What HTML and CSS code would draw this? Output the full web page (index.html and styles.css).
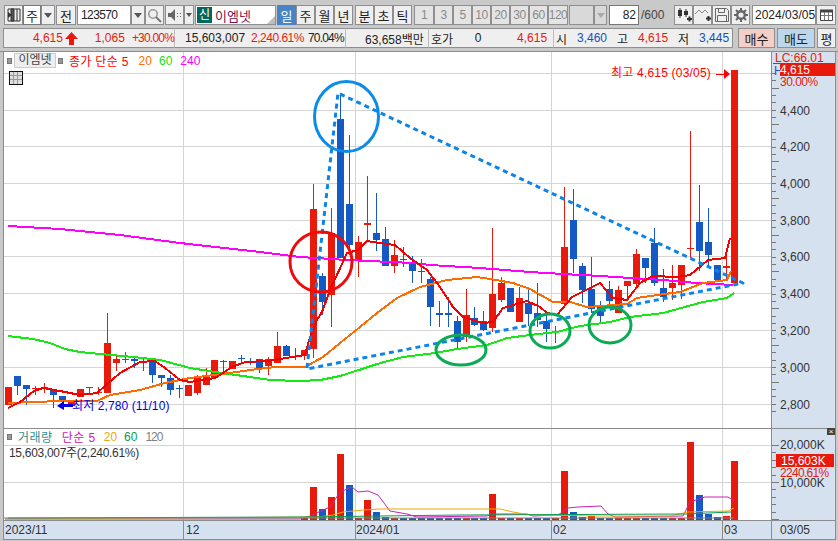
FILE: index.html
```html
<!DOCTYPE html>
<html lang="ko">
<head>
    <meta charset="UTF-8">
    <title>이엠넷 차트</title>
    <link rel="stylesheet" href="styles.css">
</head>
<body>
    <div class="toolbar">
        <button class="btn w18">
            <svg width="14" height="14" viewBox="0 0 14 14"><path d="M1 1h12v12H1z" fill="none" stroke="#333"/><path d="M4 1h3v12H4zM10 1v12" fill="#555" stroke="#333"/><path d="M5 7l-4-3v6z" fill="#333"/></svg>
        </button>
        <button class="btn btn-white w17">주</button>
        <button class="btn arrow w14"><i class="caret"></i></button>
        <button class="btn w19 gap1">전</button>
        <div class="field w55 gap1 code">123570</div>
        <button class="btn arrow w14"><i class="caret"></i></button>
        <button class="btn w18">
            <svg width="15" height="15" viewBox="0 0 15 15"><circle cx="6" cy="6" r="4.2" fill="none" stroke="#999" stroke-width="1.6"/><path d="M9 9l5 5" stroke="#777" stroke-width="2"/></svg>
        </button>
        <button class="btn w18 gap1">
            <svg width="14" height="12" viewBox="0 0 14 12"><path d="M0 4h3l4-4v12l-4-4H0z" fill="#666"/><path d="M9 4h1v1H9zM9 7h1v1H9zM12 4h1v1h-1zM12 7h1v1h-1z" fill="#666"/></svg>
        </button>
        <button class="btn arrow w10"><i class="caret small"></i></button>
        <div class="stock-name gap1">
            <span class="stock-tag">신</span>
            <span class="stock-text">이엠넷</span>
            <i class="resize"></i>
        </div>
        <button class="btn btn-on w18 gap1">일</button>
        <button class="btn w18 gap0">주</button>
        <button class="btn w18 gap0">월</button>
        <button class="btn w18 gap0">년</button>
        <button class="btn w18 gap2">분</button>
        <button class="btn w18 gap0">초</button>
        <button class="btn w18 gap0">틱</button>
        <button class="btn off w20 gap2">1</button>
        <button class="btn off w18 gap0">3</button>
        <button class="btn off w18 gap0">5</button>
        <button class="btn off w18 gap0">10</button>
        <button class="btn off w18 gap0">20</button>
        <button class="btn off w18 gap0">30</button>
        <button class="btn off w18 gap0">60</button>
        <button class="btn off w19 gap0">120</button>
        <button class="btn off blank w24 gap1"></button>
        <button class="btn off blank arrow w13"><i class="caret light"></i></button>
        <div class="field field-num w30 gap2">82</div>
        <span class="count">/600</span>
        <button class="btn w18 icon-first">
            <svg width="16" height="14" viewBox="0 0 16 14"><path d="M2 2h4v6H2zM8 3h4v4H8z" fill="#333"/><path d="M4 0v10M10 1v8" stroke="#333"/><path d="M11 11h5M13.500 8.500v5" stroke="#333" stroke-width="2"/></svg>
        </button>
        <button class="btn w18 gap0">
            <svg width="16" height="14" viewBox="0 0 16 14"><path d="M0 6l4-4 3 3 3-3 3 3" fill="none" stroke="#888"/><path d="M11 10.500h5M13.500 8v5" stroke="#333" stroke-width="2"/></svg>
        </button>
        <button class="btn w18 gap0">
            <svg width="14" height="14" viewBox="0 0 14 14"><path d="M.5.500h11l2 2v11H.5z" fill="none" stroke="#666"/><path d="M3.500.500v4h6v-4M2.500 13.500v-6h9v6" fill="none" stroke="#666"/></svg>
        </button>
        <button class="btn w18 gap0">
            <svg width="14" height="14" viewBox="0 0 14 14"><circle cx="7" cy="7" r="3.800" fill="none" stroke="#666" stroke-width="2.400"/><path d="M7 0v3M7 11v3M0 7h3M11 7h3M2 2l2 2M10 10l2 2M12 2l-2 2M4 10l-2 2" stroke="#666" stroke-width="2"/></svg>
        </button>
        <div class="field w63 gap2 date">2024/03/05</div>
        <button class="btn w19">
            <svg width="13" height="12" viewBox="0 0 13 12"><path d="M.5 2.500h12v9H.5z" fill="#fff" stroke="#444"/><path d="M0 .5h13v3H0z" fill="#444"/><path d="M4.500 3v8M8.500 3v8M1 6.500h11" stroke="#777"/></svg>
        </button>
    </div>

    <div class="quote">
        <div class="quote-group q1">
            <span class="up price">4,615</span>
            <svg class="up-arrow" width="13" height="13" viewBox="0 0 13 13"><path d="M6.500 0L13 7H9v6H4V7H0z" fill="#e81a0c"/></svg>
            <span class="up diff">1,065</span>
            <span class="up rate">+30.00%</span>
        </div>
        <div class="quote-group q2">
            <span class="volume">15,603,007</span>
            <span class="up vol-rate">2,240.61%</span>
            <span class="ratio">70.04%</span>
        </div>
        <div class="quote-group q3">63,658백만</div>
        <div class="quote-group q4">
            <span>호가</span>
            <span class="hoga">0</span>
            <span class="up hoga-price">4,615</span>
        </div>
        <div class="quote-group q5">
            <span>시</span><span class="down ohlc">3,460</span>
            <span class="ohlc-label">고</span><span class="up ohlc">4,615</span>
            <span class="ohlc-label">저</span><span class="down ohlc">3,445</span>
        </div>
        <button class="order buy">매수</button>
        <button class="order sell">매도</button>
        <button class="order flat">평</button>
    </div>

    <div class="chart">
        <svg id="chart" class="chart-svg" width="838" height="489" viewBox="0 51 838 489"></svg>
        <div class="legend">
            <i class="dot"></i>
            <span class="legend-name">이엠넷</span>
            <i class="dot dot-tight"></i>
            <span class="c-red">종가 단순 5</span>
            <span class="c-orange">20</span>
            <span class="c-green">60</span>
            <span class="c-pink">240</span>
        </div>
        <div class="grid-icon"></div>
        <div class="legend legend-vol">
            <i class="dot"></i>
            <span class="c-teal">거래량</span>
            <span class="c-violet">단순 5</span>
            <span class="c-amber">20</span>
            <span class="c-forest">60</span>
            <span class="c-gray">120</span>
        </div>
        <div class="vol-total">15,603,007주(2,240.61%)</div>
        <div class="close-x">×</div>
    </div>
    <script src="chart.js"></script>
</body>
</html>
```

FILE: styles.css
```css
* {
    box-sizing: border-box;
}
body {
    margin: 0;
    width: 838px;
    height: 541px;
    overflow: hidden;
    background: #c9c9c9;
    font-family: "Liberation Sans", "Noto Sans CJK KR", sans-serif;
    font-size: 12px;
    color: #222;
}
button {
    font: inherit;
    padding: 0;
}

/* top toolbar */
.toolbar {
    display: flex;
    height: 20px;
    margin: 5px 0 0 4px;
}
.btn {
    display: flex;
    align-items: center;
    justify-content: center;
    height: 20px;
    flex: none;
    background: #efefef;
    border: 1px solid #8f8f8f;
    color: #222;
    font-size: 13px;
}
.btn-white {
    background: #fff;
    border-color: #777;
}
.btn-on {
    background: #4a82c6;
    border-color: #4a82c6;
    color: #fff;
}
.off {
    color: #8a8a8a;
    background: #e4e4e4;
    font-size: 12px;
    letter-spacing: -0.5px;
}
.blank {
    background: #d9d9d9;
}
.w10 { width: 10px; }
.w13 { width: 13px; }
.w14 { width: 14px; }
.w17 { width: 18px; }
.w18 { width: 19px; }
.w19 { width: 20px; }
.w20 { width: 20px; }
.w24 { width: 25px; }
.w30 { width: 30px; }
.w55 { width: 54px; }
.w63 { width: 64px; }
.gap0 { margin-left: 0; }
.gap1 { margin-left: 1px; }
.gap2 { margin-left: 2px; }
.icon-first { margin-left: 2px; }
.caret {
    width: 0;
    height: 0;
    border: 4px solid transparent;
    border-top: 5px solid #555;
    border-bottom: 0;
}
.caret.small {
    border-width: 3px;
    border-top-width: 4px;
    border-bottom: 0;
}
.caret.light {
    border-top-color: #aaa;
}
.field {
    display: flex;
    align-items: center;
    height: 20px;
    flex: none;
    padding-left: 3px;
    background: #fff;
    border: 1px solid #8f8f8f;
    font-size: 12px;
}
.code {
    letter-spacing: -0.6px;
}
.field-num {
    justify-content: flex-end;
    padding: 0 2px 0 0;
    border-color: #777;
}
.date {
    padding-left: 2px;
}
.count {
    width: 33px;
    flex: none;
    padding-left: 2px;
    line-height: 20px;
    font-size: 12px;
    color: #444;
}
.stock-name {
    position: relative;
    display: flex;
    align-items: center;
    width: 81px;
    height: 20px;
    flex: none;
    padding-left: 1px;
    background: #fff;
    border: 1px solid #8f8f8f;
}
.stock-tag {
    width: 15px;
    height: 16px;
    background: #00695f;
    color: #fff;
    font-size: 12px;
    line-height: 16px;
    text-align: center;
}
.stock-text {
    margin-left: 3px;
    font-size: 13px;
    color: #7b0f4c;
}
.resize {
    position: absolute;
    right: 0;
    bottom: 0;
    border-left: 8px solid transparent;
    border-bottom: 8px solid #bdbdbd;
}

/* quote strip */
.quote {
    display: flex;
    height: 20px;
    margin: 3px 0 0 3px;
}
.quote-group {
    display: flex;
    align-items: center;
    height: 20px;
    flex: none;
    background: #efefef;
    border-top: 1px solid #8f8f8f;
    border-bottom: 1px solid #8f8f8f;
    border-right: 1px solid #bcbcbc;
    font-size: 12px;
    white-space: nowrap;
}
.up { color: #e81a0c; }
.down { color: #1450c0; }
.q1 {
    width: 172px;
    border-left: 1px solid #8f8f8f;
}
.price {
    width: 59px;
    text-align: right;
}
.up-arrow {
    margin-left: 2px;
}
.diff {
    width: 47px;
    text-align: right;
}
.rate {
    margin-left: 7px;
    letter-spacing: -0.8px;
}
.q2 { width: 171px; }
.volume { margin-left: 10px; }
.vol-rate {
    margin-left: 6px;
    letter-spacing: -0.5px;
}
.ratio {
    margin-left: 4px;
    letter-spacing: -0.8px;
}
.q3 {
    width: 83px;
    padding-left: 19px;
}
.q4 {
    width: 125px;
    padding-left: 2px;
}
.hoga {
    width: 34px;
    text-align: center;
    margin-left: 8px;
}
.hoga-price {
    margin-left: 22px;
}
.q5 {
    width: 179px;
    padding-left: 2px;
    border-right: 1px solid #8f8f8f;
}
.ohlc {
    width: 40px;
    text-align: right;
}
.ohlc-label {
    margin-left: 10px;
}
.order {
    height: 20px;
    flex: none;
    border: 1px solid #8f8f8f;
    font-size: 13px;
    color: #222;
}
.buy {
    width: 37px;
    margin-left: 5px;
    background: #f4cfc8;
}
.sell {
    width: 38px;
    margin-left: 2px;
    background: #bcd6ee;
}
.flat {
    width: 19px;
    margin-left: 2px;
    background: #efefef;
}

/* chart */
.chart {
    position: relative;
    height: 489px;
    margin-top: 3px;
}
.chart-svg {
    display: block;
}
.chart-svg text {
    font-family: "Liberation Sans", "Noto Sans CJK KR", sans-serif;
    font-size: 12px;
}
.legend {
    position: absolute;
    top: 2px;
    left: 7px;
    display: flex;
    align-items: center;
    height: 15px;
    gap: 6px;
    font-size: 12px;
}
.legend-vol {
    top: 378px;
    left: 7px;
}
.dot {
    width: 5px;
    height: 6px;
    background: #999;
    border: 1px solid #777;
}
.dot-tight {
    margin-left: -4px;
}
.legend-name {
    margin-left: -4px;
    padding: 0 2px;
    width: 42px;
    height: 15px;
    line-height: 13px;
    text-align: center;
    background: #eee;
    border: 1px solid #ccc;
    color: #444;
}
.c-red { color: #f00; letter-spacing: 0.3px; }
.c-orange { color: #ff6a00; margin-left: 4px; }
.c-green { color: #16e016; margin-left: 1px; }
.c-pink { color: #f0f; margin-left: 2px; }
.c-teal { color: #2f8f8f; letter-spacing: 0.5px; }
.c-violet { color: #d020b0; letter-spacing: 0.5px; margin-left: 3px; }
.c-amber { color: #f0a800; margin-left: 2px; }
.c-forest { color: #0a9a50; margin-left: 1px; }
.c-gray { color: #808080; margin-left: 2px; letter-spacing: -1px; }
.grid-icon {
    position: absolute;
    top: 20px;
    left: 9px;
    width: 14px;
    height: 14px;
    border: 1px solid #111;
    background:
        linear-gradient(#999, #999) 0 3px / 100% 1px no-repeat,
        linear-gradient(#999, #999) 0 7px / 100% 1px no-repeat,
        linear-gradient(#999, #999) 3px 0 / 1px 100% no-repeat,
        linear-gradient(#999, #999) 7px 0 / 1px 100% no-repeat,
        #ddd;
}
.vol-total {
    position: absolute;
    top: 392px;
    left: 9px;
    font-size: 12px;
    letter-spacing: -0.3px;
    color: #333;
}
.close-x {
    position: absolute;
    top: 377px;
    left: 827px;
    width: 8px;
    height: 7px;
    background: #444;
    color: #fff;
    font-size: 8px;
    line-height: 7px;
    text-align: center;
}
```

FILE: chart.js
```js
const svg = document.getElementById('chart');
const NS = 'http://www.w3.org/2000/svg';
const RED = '#e81a0c';
const BLUE = '#1459c4';
const CRISP = { 'shape-rendering': 'crispEdges' };

function add(tag, attrs, text) {
    const el = document.createElementNS(NS, tag);
    for (const k in attrs) el.setAttribute(k, attrs[k]);
    if (text) el.textContent = text;
    svg.appendChild(el);
    return el;
}

function rect(x, y, w, h, fill) {
    add('rect', { x, y, width: w, height: h, fill, 'shape-rendering': 'crispEdges' });
}

function line(pts, stroke, width, extra) {
    add('polyline', Object.assign({
        points: pts.map(p => p.join(',')).join(' '),
        fill: 'none', stroke, 'stroke-width': width, 'stroke-linejoin': 'round'
    }, extra || {}));
}

function label(x, y, str, fill, spacing) {
    const attrs = { x, y, fill };
    if (spacing) attrs['letter-spacing'] = spacing;
    add('text', attrs, str);
}

// backgrounds
rect(3, 51, 770, 469, '#fff');
rect(771, 52, 64, 487, '#d6e1ef');
rect(4, 521, 767, 18, '#d6e1ef');

// grid
const priceGrid = [73, 110, 146, 183, 220, 256, 293, 330, 367, 404];
const volGrid = [445, 482];
priceGrid.concat(volGrid).forEach(y => rect(4, y, 767, 1, '#d4d4d4'));
[183, 355, 551, 722].forEach(x => {
    rect(x, 52, 1, 376, '#d4d4d4');
    rect(x, 429, 1, 92, '#d4d4d4');
    rect(x, 521, 1, 18, '#8c8c8c');
});

// frame
rect(0, 51, 838, 1, '#8c8c8c');
rect(3, 52, 1, 487, '#8c8c8c');
rect(771, 52, 1, 487, '#8c8c8c');
rect(835, 52, 1, 487, '#8c8c8c');
rect(4, 428, 832, 1, '#8c8c8c');
rect(4, 520, 832, 1, '#8c8c8c');
rect(3, 539, 833, 1, '#8c8c8c');

// axis ticks
for (let i = 0; i < 47; i++) rect(772, Math.round(73 + i * 7.35), i % 5 === 2 ? 7 : 4, 1, '#777');
for (let i = 0; i < 11; i++) rect(772, Math.round(445 + i * 7.4), i % 5 === 0 ? 7 : 4, 1, '#777');

// candles: [bodyTop, bodyBottom, wickTop, wickBottom, up?]
const candles = [
    [387, 405, 387, 405, 1], [376, 386, 376, 395, 0], [385, 389, 385, 405, 0], [388, 389, 386, 395, 1],
    [387, 388, 383, 393, 1], [389, 395, 389, 408, 0], [396, 402, 396, 408, 0], [402, 406, 402, 406, 1],
    [389, 397, 389, 397, 1], [387, 388, 387, 395, 1], [392, 393, 387, 395, 1], [343, 393, 313, 393, 1],
    [359, 363, 355, 371, 1], [359, 360, 352, 363, 1], [359, 361, 357, 368, 0], [362, 363, 358, 371, 1],
    [362, 375, 362, 383, 0], [375, 378, 375, 387, 0], [378, 390, 375, 395, 0], [388, 389, 385, 398, 0],
    [385, 396, 385, 396, 1], [376, 393, 375, 395, 1], [376, 385, 368, 385, 1], [360, 378, 360, 378, 1],
    [361, 362, 360, 373, 0], [361, 369, 361, 369, 1], [358, 359, 355, 363, 0], [361, 362, 358, 365, 0],
    [359, 369, 359, 373, 0], [359, 366, 357, 375, 1], [346, 363, 332, 363, 1], [346, 356, 345, 356, 0],
    [356, 357, 348, 360, 0], [350, 356, 350, 360, 1], [209, 349, 184, 358, 1], [276, 302, 273, 315, 0],
    [233, 295, 208, 327, 1], [119, 258, 93, 258, 0], [204, 245, 135, 255, 0], [242, 260, 236, 277, 1],
    [223, 225, 176, 242, 1], [233, 240, 193, 251, 0], [239, 266, 227, 266, 0], [255, 266, 240, 273, 1],
    [259, 260, 247, 267, 0], [263, 271, 256, 283, 0], [271, 272, 259, 283, 0], [279, 307, 277, 326, 0],
    [313, 315, 301, 327, 0], [313, 315, 297, 327, 0], [321, 342, 316, 349, 0], [315, 337, 289, 342, 1],
    [318, 325, 307, 326, 0], [321, 330, 311, 331, 0], [294, 328, 228, 332, 1], [283, 300, 277, 302, 1],
    [288, 312, 288, 312, 0], [298, 322, 287, 322, 1], [303, 314, 287, 326, 0], [313, 320, 283, 327, 0],
    [321, 329, 312, 342, 0], [331, 333, 326, 343, 1], [247, 304, 187, 304, 1], [220, 259, 189, 273, 0],
    [266, 290, 263, 303, 0], [289, 309, 257, 313, 0], [306, 316, 301, 324, 0], [289, 301, 281, 305, 0],
    [290, 313, 286, 313, 1], [281, 286, 281, 298, 1], [254, 284, 249, 288, 1], [258, 268, 258, 283, 0],
    [243, 283, 228, 286, 0], [288, 297, 269, 302, 0], [283, 288, 265, 300, 1], [265, 285, 265, 299, 1],
    [248, 249, 131, 258, 1], [222, 251, 185, 271, 0], [242, 255, 208, 267, 0], [265, 280, 265, 280, 0],
    [266, 268, 251, 280, 1], [70, 283, 70, 283, 1]
];
const barX = i => Math.round(8.3 + 8.965 * i);

candles.forEach((c, i) => {
    const x = barX(i);
    const color = c[4] ? RED : BLUE;
    rect(x, c[2], 1, c[3] - c[2], color);
    rect(x - 3, c[0], 7, c[1] - c[0], color);
});

// moving averages
line([[8, 226], [60, 229], [120, 235], [180, 243], [260, 252], [300, 257], [347, 260], [413, 263], [430, 265], [480, 268], [530, 272], [563, 274], [600, 276], [630, 278], [663, 280], [697, 283], [733, 285]], '#ff00ff', 2, CRISP);
line([[8, 336], [33, 339], [50, 343], [65, 349], [80, 352], [100, 354], [133, 357], [160, 360], [190, 368], [215, 372], [250, 377], [270, 380], [300, 381], [320, 380], [340, 376], [362, 369], [377, 364], [403, 357], [435, 353], [457, 349], [487, 345], [507, 338], [530, 335], [557, 332], [580, 326], [610, 322], [630, 317], [663, 313], [703, 302], [727, 298], [734, 293]], '#16e816', 2, CRISP);
line([[8, 403], [35, 402], [60, 401], [97, 401], [110, 395], [140, 390], [165, 383], [190, 378], [230, 373], [250, 370], [275, 367], [305, 367], [323, 357], [340, 343], [360, 327], [377, 313], [397, 298], [420, 287], [447, 280], [477, 277], [490, 279], [513, 283], [530, 289], [553, 302], [570, 302], [587, 307], [627, 304], [637, 298], [657, 295], [680, 292], [703, 283], [727, 280], [731, 271]], '#ff6a00', 2, CRISP);
line([[8, 408], [20, 402], [34, 391], [43, 388], [60, 391], [80, 395], [97, 393], [106, 385], [120, 373], [140, 362], [155, 361], [165, 368], [180, 380], [190, 382], [215, 378], [232, 367], [245, 362], [268, 361], [280, 359], [305, 355], [310, 337], [317, 320], [322, 312], [330, 290], [347, 253], [358, 250], [367, 241], [380, 243], [395, 245], [410, 258], [427, 270], [440, 287], [453, 307], [463, 317], [483, 323], [493, 322], [503, 308], [527, 301], [540, 307], [547, 313], [557, 315], [572, 297], [600, 283], [613, 298], [627, 300], [640, 283], [653, 276], [677, 277], [690, 275], [708, 260], [725, 258], [730, 238]], '#f50000', 2, CRISP);

// hand drawn overlays
line([[307, 368], [338, 93], [743, 283], [307, 369]], '#0a84e8', 3, { 'stroke-dasharray': '5 4' });
[[346.5, 116.5, 32, 35, '#0a8ce8'], [321, 262, 31, 30, '#f00a0a'], [461, 350, 25, 15, '#0bab55'], [550, 331, 20, 17, '#0bab55'], [610, 325, 21, 18, '#0bab55']].forEach(e => {
    add('ellipse', { cx: e[0], cy: e[1], rx: e[2], ry: e[3], fill: 'none', stroke: e[4], 'stroke-width': 3 });
});

// high / low marks
label(611, 77, '최고 4,615 (03/05)', '#f00', 0.2);
rect(716, 74, 10, 1, '#f00');
add('path', { d: 'M730 74l-6-5v10z', fill: '#f00' });
add('path', { d: 'M57 406l7-5v3h9v3h-9v3z', fill: '#00d' });
label(72, 410, '최저 2,780 (11/10)', '#00d', 0.1);

// price axis
rect(773, 63, 7, 1, RED);
label(775, 62, 'LC:66.01', RED);
label(774, 75, 'H', '#1459c4');
rect(780, 63, 55, 13, RED);
label(780, 74, '4,615', '#fff');
label(780, 86, '30.00%', RED, -0.5);
[['4,400', 110], ['4,200', 146], ['4,000', 183], ['3,800', 220], ['3,600', 256], ['3,400', 293], ['3,200', 330], ['3,000', 367], ['2,800', 404]].forEach(t => {
    label(780, t[1] + 5, t[0], '#333');
});

// volume bars: small ones everywhere, the real spikes on top
const spikes = { 34: [487, 1], 35: [509, 0], 36: [497, 1], 37: [454, 1], 38: [485, 0], 40: [500, 1], 41: [512, 0], 42: [517, 0], 54: [494, 1], 62: [471, 1], 63: [512, 0], 64: [517, 0], 65: [516, 1], 76: [442, 1], 77: [495, 0], 78: [514, 0], 79: [517, 0], 80: [516, 1], 81: [461, 1] };
candles.forEach((c, i) => {
    if (i < 33) return;
    const s = spikes[i] || [518, c[4]];
    rect(barX(i) - 3, s[0], 7, 520 - s[0], s[1] ? RED : BLUE);
});

line([[5, 519], [300, 519], [310, 516], [330, 507], [340, 492], [352, 487], [358, 492], [368, 491], [378, 495], [390, 511], [407, 514], [417, 517], [487, 516], [493, 514], [527, 514], [533, 516], [558, 515], [568, 508], [578, 507], [601, 506], [608, 514], [615, 517], [683, 516], [690, 502], [705, 497], [728, 497], [734, 501]], '#d020b0', 1);
line([[8, 519], [318, 517], [333, 515], [343, 512], [363, 510], [380, 509], [500, 509], [513, 512], [530, 515], [600, 516], [670, 516], [688, 512], [728, 511], [734, 508]], '#f0a800', 1);
line([[8, 518], [300, 517], [460, 515], [685, 514], [731, 512]], '#0a9a50', 1);
line([[4, 518], [734, 518]], '#808080', 1);

// volume axis
label(780, 449, '20,000K', '#333');
label(780, 487, '10,000K', '#333');
rect(776, 454, 58, 13, RED);
label(781, 465, '15,603K', '#fff');
label(780, 477, '2240.61%', RED, -0.7);

// time axis
[['2023/11', 5], ['12', 186], ['2024/01', 356], ['02', 553], ['03', 724], ['03/05', 780]].forEach(t => {
    label(t[1], 534, t[0], '#333');
});
```
